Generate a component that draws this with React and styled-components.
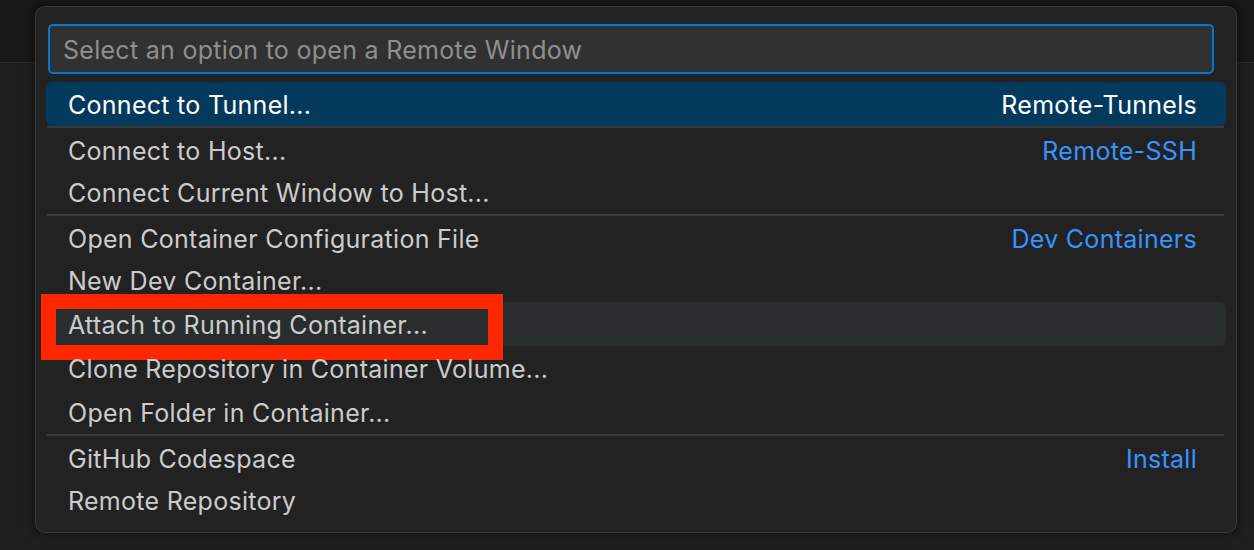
import React from "react";
import styled, { createGlobalStyle } from "styled-components";

const Global = createGlobalStyle`
  html, body { margin: 0; padding: 0; }
  body {
    background: #1f1f1f;
    font-family: Inter, "Noto Sans", "Liberation Sans", sans-serif;
    -webkit-font-smoothing: antialiased;
  }
`;

const Page = styled.div`
  position: relative;
  width: 1254px;
  height: 550px;
  overflow: hidden;
  background: #1f1f1f;
`;

const TopBar = styled.div`
  height: 62px;
  background: #181818;
  border-bottom: 1px solid #2b2b2b;
`;

const Panel = styled.div`
  position: absolute;
  left: 35px;
  top: 6px;
  width: 1200px;
  height: 508px;
  background: #222222;
  border: 1px solid #3a3a3a;
  border-radius: 10px;
  box-shadow: 0 0 8px 2px rgba(0, 0, 0, 0.45);
  display: flex;
  flex-direction: column;
  padding-top: 17px;
  box-sizing: content-box;
`;

const Input = styled.div`
  margin: 0 22px 0 12px;
  height: 45px;
  background: #313131;
  border: 2px solid #0078d4;
  border-radius: 5px;
  display: flex;
  align-items: center;
  padding-left: 13px;
  padding-top: 1px;
  box-sizing: content-box;
  color: #8f8f8f;
  font-size: 25px;
  letter-spacing: 0.28px;
`;

const List = styled.div`
  margin: 8px 10px 0 10px;
  display: flex;
  flex-direction: column;
`;

const Row = styled.div`
  position: relative;
  height: 44px;
  box-sizing: border-box;
  display: flex;
  align-items: center;
  justify-content: space-between;
  padding: ${(p) => (p.$sep ? "6px" : "2px")} 29px 0 22px;
  border-radius: 6px;
  font-size: 25px;
  letter-spacing: 0.28px;
  color: ${(p) => (p.$selected ? "#ffffff" : "#cccccc")};
  background: ${(p) =>
    p.$selected ? "#04395e" : p.$hover ? "#2a2d2e" : "transparent"};

  &::before {
    content: "";
    display: ${(p) => (p.$sep ? "block" : "none")};
    position: absolute;
    left: 1px;
    right: 2px;
    top: 0;
    height: 2px;
    background: #3a3a3a;
  }
`;

const Label = styled.span`
  white-space: nowrap;
`;

const Desc = styled.span`
  white-space: nowrap;
  color: ${(p) => (p.$selected ? "#ffffff" : "#3794ff")};
`;

const Highlight = styled.div`
  position: absolute;
  left: -5px;
  top: -8px;
  width: 462px;
  height: 66px;
  box-sizing: border-box;
  border: 15px solid #ff2600;
  pointer-events: none;
`;

const items = [
  { label: "Connect to Tunnel...", desc: "Remote-Tunnels", selected: true },
  { label: "Connect to Host...", desc: "Remote-SSH", sep: true },
  { label: "Connect Current Window to Host..." },
  { label: "Open Container Configuration File", desc: "Dev Containers", sep: true },
  { label: "New Dev Container..." },
  { label: "Attach to Running Container...", hover: true, mark: true },
  { label: "Clone Repository in Container Volume..." },
  { label: "Open Folder in Container..." },
  { label: "GitHub Codespace", desc: "Install", sep: true },
  { label: "Remote Repository" },
];

export default function App() {
  return (
    <Page>
      <Global />
      <TopBar />
      <Panel>
        <Input>Select an option to open a Remote Window</Input>
        <List>
          {items.map((it) => (
            <Row
              key={it.label}
              $selected={it.selected}
              $hover={it.hover}
              $sep={it.sep}
            >
              <Label>{it.label}</Label>
              {it.desc && <Desc $selected={it.selected}>{it.desc}</Desc>}
              {it.mark && <Highlight />}
            </Row>
          ))}
        </List>
      </Panel>
    </Page>
  );
}
